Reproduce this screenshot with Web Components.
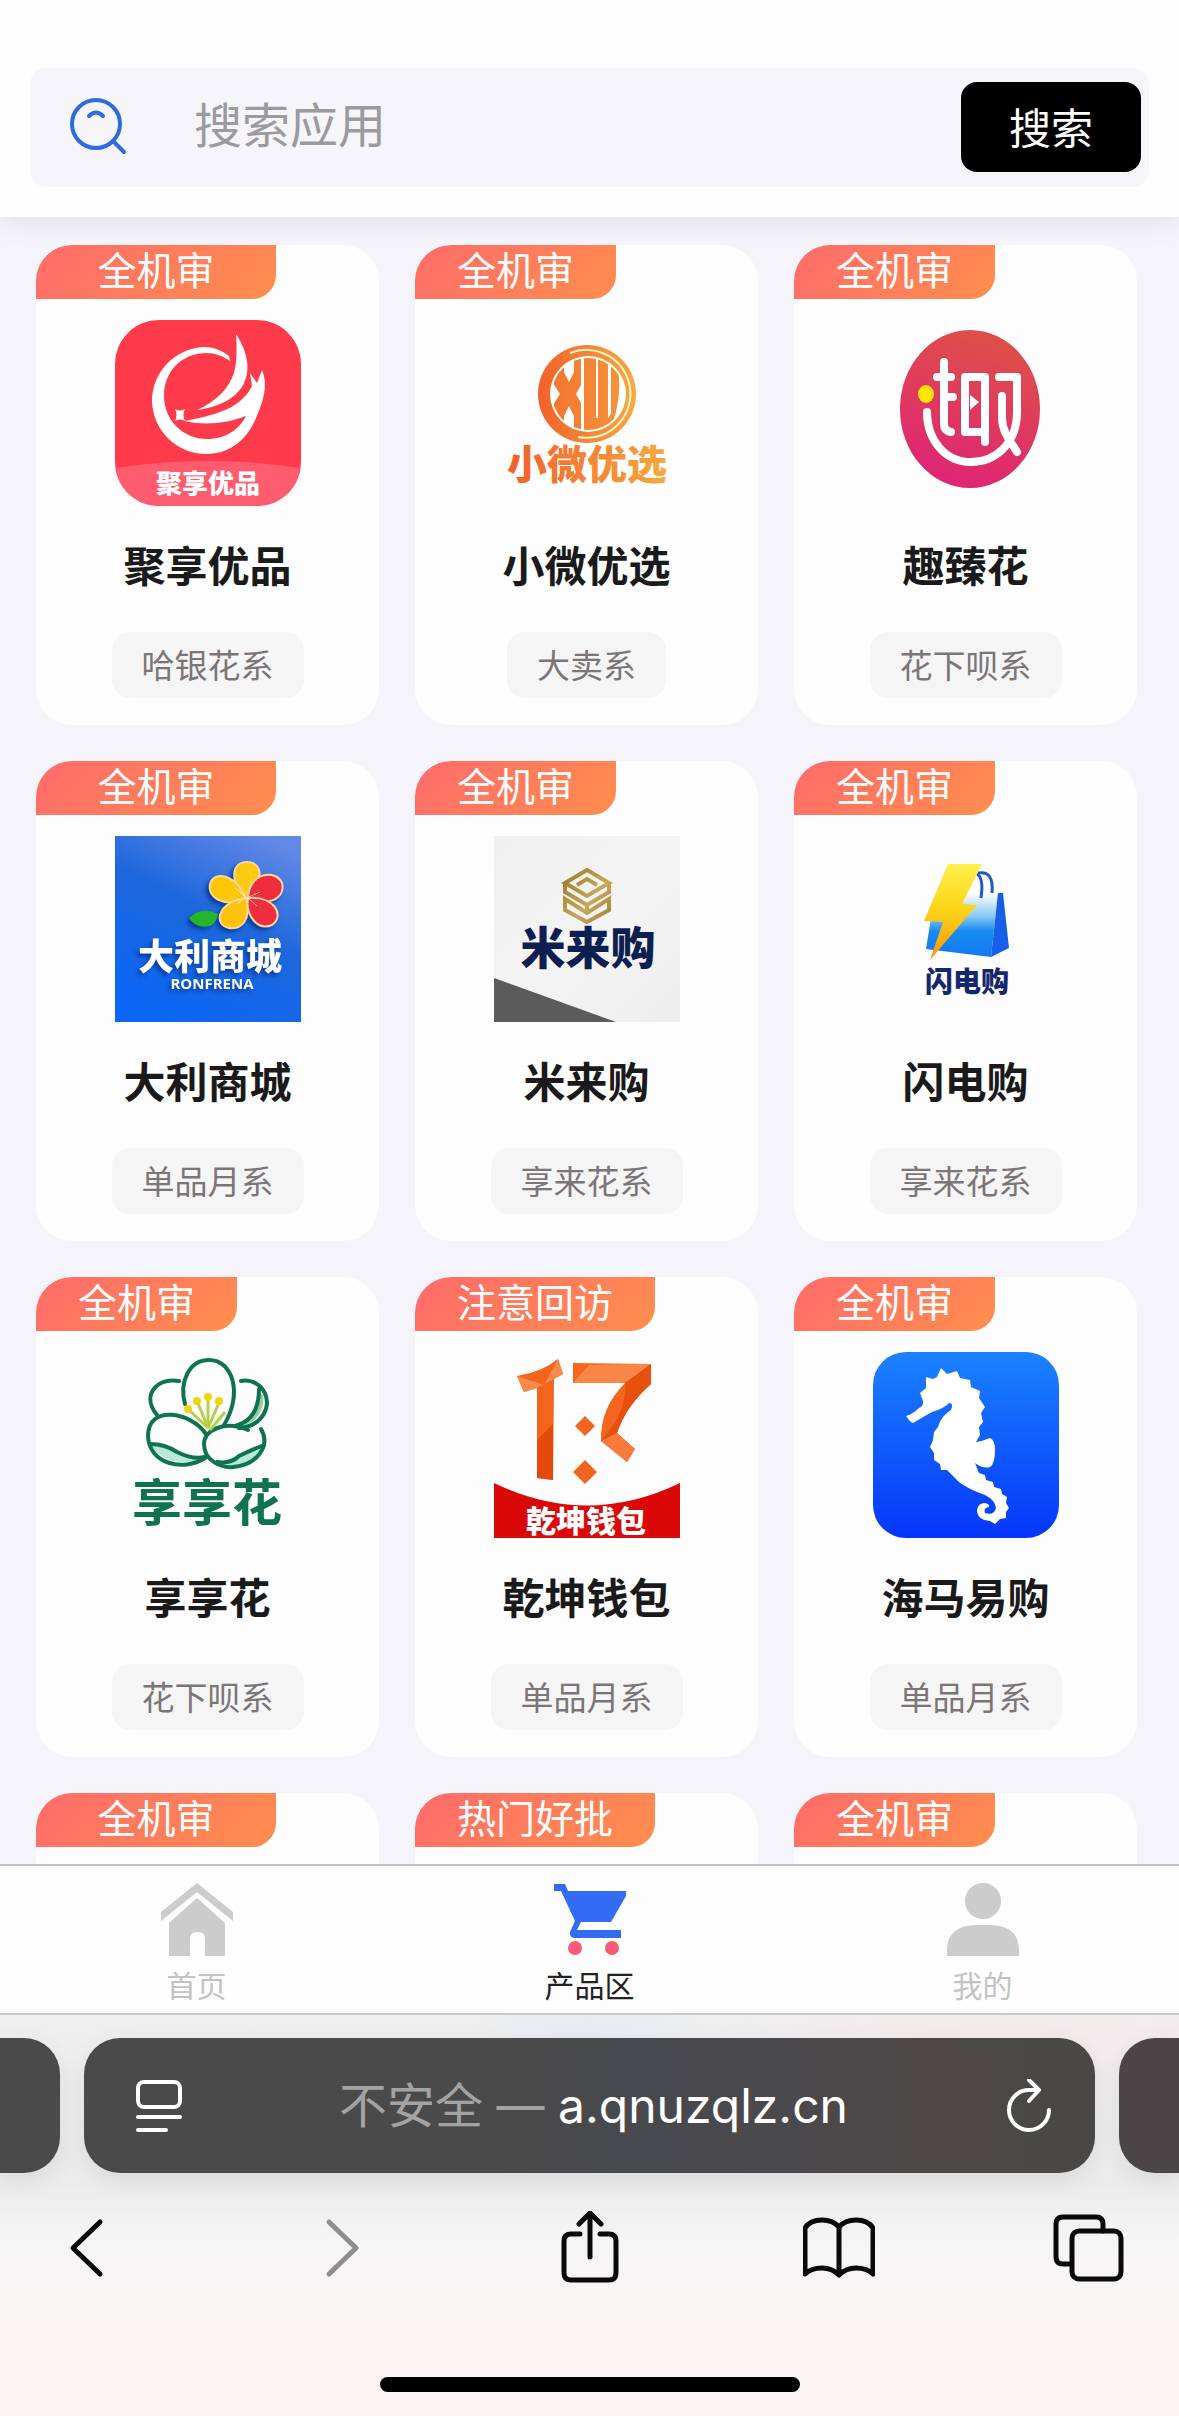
<!DOCTYPE html>
<html lang="zh-CN">
<head>
<meta charset="utf-8">
<meta name="viewport" content="width=device-width, initial-scale=1">
<title>产品区</title>
<style>
  body {
    margin: 0;
    height: 100vh;
    display: flex;
    flex-direction: column;
    overflow: hidden;
    background: #f4f4fa;
    color: #1a1a1a;
    font-family: "Noto Sans CJK SC", "Noto Sans", sans-serif;
  }

  main {
    flex: 1;
    min-height: 0;
    overflow: hidden;
    padding: 28px 42px 0 36px;
    display: grid;
    grid-template-columns: repeat(3, minmax(0, 1fr));
    grid-auto-rows: max-content;
    gap: 36px;
  }

  svg {
    overflow: visible;
  }

  svg text {
    font-family: "Noto Sans CJK SC", sans-serif;
    font-weight: 900;
    text-anchor: middle;
  }

  .raised {
    filter: drop-shadow(-3px 3px 2px #083f9c);
  }
</style>
</head>
<body>

<search-bar placeholder="搜索应用">搜索</search-bar>

<main>
  <app-card badge="全机审" wide name="聚享优品" series="哈银花系">
    <svg viewBox="0 0 186 186">
      <clipPath id="jx"><rect width="186" height="186" rx="44"/></clipPath>
      <g clip-path="url(#jx)">
        <rect width="186" height="186" fill="#ff3a4a"/>
        <path d="M0 148Q93 134 186 148V186H0Z" fill="#ff5c70"/>
      </g>
      <path fill="#fff" d="M114 36C106 30 98 27 90 27A54 54 0 0 0 37 81A54 54 0 0 0 91 134C116 134 133 118 141 98C147 84 154 66 147 50L142 63L135 53L137 66C128 84 110 94 69 101C92 106 112 103 131 96C124 110 110 119 92 119C68 119 49 100 49 76C49 52 66 33 92 33C100 33 108 36 115 41Z"/>
      <path fill="#fff" d="M121 14C134 34 136 52 127 67C118 80 103 87 82 90C102 81 114 68 119 53C122 42 122 28 121 14Z"/>
      <path fill="#fff" d="M60 89Q65 92 70 89Q67 95 70 101Q65 98 60 101Q63 95 60 89Z"/>
      <text x="93" y="173" font-size="26" fill="#fff">聚享优品</text>
    </svg>
  </app-card>

  <app-card badge="全机审" name="小微优选" series="大卖系">
    <svg viewBox="0 0 186 186">
      <defs>
        <linearGradient id="xw"><stop stop-color="#f2602b"/><stop offset="1" stop-color="#f6ab3e"/></linearGradient>
        <linearGradient id="xwt" gradientUnits="userSpaceOnUse" x1="14" x2="172"><stop stop-color="#f2602b"/><stop offset="1" stop-color="#f6a93e"/></linearGradient>
        <clipPath id="xwc"><circle cx="94" cy="74" r="36"/></clipPath>
      </defs>
      <circle cx="93" cy="74" r="49" fill="url(#xw)"/>
      <path d="M76 33A44 44 0 1 1 84 117" fill="none" stroke="#fff3cf" stroke-width="2"/>
      <circle cx="94" cy="74" r="38" fill="#fff"/>
      <g clip-path="url(#xwc)" fill="url(#xwt)">
        <path d="M57 38H70V52L75 62L80 52V38H87V65L82 74L87 83V112H80V96L75 86L70 96V112H57V88L66 74L57 60Z"/>
        <path d="M90 38H102V98H104V38H114V98L117 94V38H121Q129 60 122 92L116 112H90Z"/>
      </g>
      <path d="M103 46V98M115 44V94" stroke="#fff" stroke-width="2"/>
      <text x="93" y="159" font-size="40" fill="url(#xwt)">小微优选</text>
    </svg>
  </app-card>

  <app-card badge="全机审" name="趣臻花" series="花下呗系">
    <svg viewBox="0 0 186 186">
      <linearGradient id="qz" x1=".7" y1="0" x2=".4" y2="1"><stop offset=".1" stop-color="#df4d4b"/><stop offset="1" stop-color="#df2475"/></linearGradient>
      <ellipse cx="97" cy="89" rx="70" ry="79" fill="url(#qz)"/>
      <g fill="none" stroke="#fff" stroke-width="8" stroke-linecap="round" stroke-linejoin="round">
        <path d="M71 42V104Q71 111 78 112M64 57H78M71 77H80"/>
        <path d="M112 112H92V57H112V122"/>
        <path d="M126 57H144V92C144 124 122 142 98 142C72 142 54 120 54 92"/>
        <path d="M129 76V98C129 112 138 122 144 132"/>
      </g>
      <path d="M97 75L106 82L97 90Z" fill="#fff"/>
      <ellipse cx="53" cy="74" rx="8" ry="9" fill="#ffe600"/>
    </svg>
  </app-card>

  <app-card badge="全机审" wide name="大利商城" series="单品月系">
    <svg viewBox="0 0 186 186">
      <linearGradient id="dl" x1=".8" y1="0" x2=".3" y2="1"><stop stop-color="#6288e6"/><stop offset=".45" stop-color="#1e67dc"/><stop offset="1" stop-color="#0b66f5"/></linearGradient>
      <rect width="186" height="186" fill="url(#dl)"/>
      <g class="raised">
        <path d="M74 82Q86 70 103 78Q100 94 84 90Q78 88 74 82Z" fill="#25b52c"/>
        <g stroke="#f9d9a0" stroke-width="2">
          <path d="M131 63C114 46 116 26 132 26C148 26 150 46 131 63Z" fill="#ffc913"/>
          <path d="M131 63C110 72 92 62 95 48C99 34 121 38 131 63Z" fill="#ffc507"/>
          <path d="M131 62C137 84 126 94 114 92C98 89 102 66 131 62Z" fill="#ffc20a"/>
          <path d="M133 62C134 36 161 33 167 47C171 63 152 71 133 62Z" fill="#ee2d3e"/>
          <path d="M133 62C160 60 170 80 157 89C143 95 130 80 133 62Z" fill="#ee2d3e"/>
        </g>
        <path d="M131 61L120 52M131 61L122 68M134 61L145 56M134 63L142 70" stroke="#fff" stroke-opacity=".6"/>
        <text x="95" y="134" font-size="36" fill="#fff">大利商城</text>
        <text x="97" y="153" font-size="15" fill="#fff" style="font-family: 'Open Sans', sans-serif; font-weight: 700">RONFRENA</text>
      </g>
    </svg>
  </app-card>

  <app-card badge="全机审" name="米来购" series="享来花系">
    <svg viewBox="0 0 186 186">
      <defs>
        <linearGradient id="ml" x1="0" y1="0" x2="1" y2="1"><stop stop-color="#efefef"/><stop offset=".5" stop-color="#f4f4f4"/><stop offset="1" stop-color="#ededed"/></linearGradient>
        <linearGradient id="gold" x1="0" y1="0" x2="1" y2="1"><stop stop-color="#9b7c2c"/><stop offset=".6" stop-color="#c9a858"/><stop offset="1" stop-color="#a07f3a"/></linearGradient>
      </defs>
      <rect width="186" height="186" fill="url(#ml)"/>
      <path d="M0 142L122 186H0Z" fill="#5b5b5b"/>
      <path fill="none" stroke="url(#gold)" stroke-width="4" d="M93 34L115 47L93 60L71 47ZM83 49L93 43L103 49M71 46V56L93 69L115 56V46M71 63L93 77L115 63V74L93 86L71 74ZM93 70V77"/>
      <text x="94" y="129" font-size="45" fill="#0c1f50">米来购</text>
    </svg>
  </app-card>

  <app-card badge="全机审" name="闪电购" series="享来花系">
    <svg viewBox="0 0 186 186">
      <defs>
        <linearGradient id="bag" x1="0" y1="0" x2="0" y2="1"><stop stop-color="#fff"/><stop offset=".35" stop-color="#8dcbf2"/><stop offset=".6" stop-color="#178bf0"/><stop offset="1" stop-color="#1278f2"/></linearGradient>
        <linearGradient id="bolt" x1="0" y1="0" x2="0" y2="1"><stop stop-color="#fff04a"/><stop offset=".5" stop-color="#fcd116"/><stop offset="1" stop-color="#f79310"/></linearGradient>
      </defs>
      <path d="M95 57H125L118 121L53 113L58 82Z" fill="url(#bag)"/>
      <path d="M125 57H130L136 112L118 121Z" fill="#1560e6"/>
      <path d="M104 38Q111 42 108 62M105 37Q121 34 119 57" fill="none" stroke="#2058c8" stroke-width="3"/>
      <path d="M75 28H109L89 68L104 69L57 124L70 86L51 85Z" fill="url(#bolt)"/>
      <text x="94" y="156" font-size="28" fill="#15276c">闪电购</text>
    </svg>
  </app-card>

  <app-card badge="全机审" name="享享花" series="花下呗系">
    <svg viewBox="0 0 186 186">
      <path d="M35 92Q50 92 62 100Q78 108 90 105Q70 114 52 107Q38 100 35 92ZM104 112Q116 112 124 104Q134 99 150 94Q144 110 126 114Q114 116 104 112Z" fill="#b8e8d8"/>
      <path d="M143 38C143 56 138 68 118 74C138 76 150 60 148 44Z" fill="#8fd0a0"/>
      <g fill="none" stroke="#0f7350" stroke-width="4" stroke-linecap="round">
        <path d="M70 52C64 30 74 8 94 8C118 8 128 42 109 73"/>
        <path d="M64 29C44 25 25 42 42 63M126 29C148 25 162 52 143 69Q136 75 124 76M144 37C144 58 136 70 120 74"/>
        <path d="M91 82C76 60 33 52 33 84C34 112 68 120 90 106"/>
        <path d="M133 78C110 68 89 78 89 92C89 110 108 116 118 115C142 113 156 94 146 77"/>
        <path d="M35 92Q50 92 62 100Q78 108 90 105M102 110Q116 112 124 104Q134 99 149 93"/>
      </g>
      <path d="M93 76L74 58M93 76L83 51M93 76V46M93 76L104 51M95 78L110 60" stroke="#b7cf4a" stroke-width="3"/>
      <g fill="#f2d50c"><circle cx="73" cy="57" r="4"/><circle cx="82" cy="49" r="4"/><circle cx="93" cy="45" r="4"/><circle cx="104" cy="49" r="4"/></g>
      <text x="92" y="169" font-size="50" fill="#0f7350" style="font-weight: 700">享享花</text>
    </svg>
  </app-card>

  <app-card badge="注意回访" name="乾坤钱包" series="单品月系">
    <svg viewBox="0 0 186 186">
      <path d="M23 24Q48 20 64 7L69 22L60 27L59 128L43 126V36L30 40Z" fill="#f4641c"/>
      <path d="M43 88L59 72V128L43 126Z" fill="#e34a0c"/>
      <path d="M23 24L50 33L64 7L69 22L43 36L30 40Z" fill="#f98a4c"/>
      <path d="M79 11L157 12V32Q132 54 123 81L141 97L133 110L107 89Q106 56 131 31H79Z" fill="#f4661f"/>
      <path d="M157 12L131 31H79L95 13Z" fill="#fa8648"/>
      <path d="M157 12V32Q132 54 123 81L107 89Q134 58 131 31Z" fill="#e8500f"/>
      <path d="M107 89L123 81L141 97L133 110Z" fill="#f97a3c"/>
      <path d="M91 64L101 74L91 84L81 74ZM91 108L103 120L91 132L79 120Z" fill="#f26520"/>
      <path d="M0 131Q93 176 186 131V186H0Z" fill="#da0809"/>
      <text x="92" y="180" font-size="30" fill="#fff">乾坤钱包</text>
    </svg>
  </app-card>

  <app-card badge="全机审" name="海马易购" series="单品月系">
    <svg viewBox="0 0 186 186">
      <linearGradient id="hm" x1="0" y1="0" x2="0" y2="1"><stop stop-color="#1b82ff"/><stop offset="1" stop-color="#0536fa"/></linearGradient>
      <rect width="186" height="186" rx="33" fill="url(#hm)"/>
      <path fill="#fff" d="M68 16L74 22L84 19L87 26L97 28L98 35L107 39L106 46L112 55L108 61L110 70L106 75L107 83L103 90Q110 89 117 86Q122 88 122 98Q122 112 117 115Q110 117 102 111L106 121L112 123L113 128L120 130L121 135L128 137L129 142L134 145L133 151L136 156L133 160L133 166L127 167L122 172L117 169Q104 168 104 158Q105 151 112 151Q117 152 116 155Q110 156 112 161Q121 164 123 156Q122 148 112 143Q95 137 86 130Q78 122 74 118L68 118L67 112L61 108L61 101L57 95L60 88L61 80L65 75Q68 64 78 58Q81 51 76 51Q72 56 59 60Q50 65 40 71Q37 70 33 64Q40 62 46 56Q51 54 50 49L47 41L53 36L53 25L60 27L64 25Z"/>
    </svg>
  </app-card>

  <app-card badge="全机审" wide></app-card>
  <app-card badge="热门好批"></app-card>
  <app-card badge="全机审"></app-card>
</main>

<tab-bar>
  <tab-item label="首页">
    <svg viewBox="0 0 72 73" fill="#ccc">
      <path d="M36 0L72 29V38L36 9L0 38V29Z"/>
      <path d="M36 15L64 40V73H44V55Q44 49 36 49Q29 49 29 55V73H8V40Z"/>
    </svg>
  </tab-item>
  <tab-item label="产品区" active>
    <svg viewBox="0 0 72 73">
      <path fill="#336cf4" fill-rule="evenodd" d="M0 1H11L14 8H72V13L57 39H27L23 47H67V55H20Q15 54 16 49L21 38L7 8H0Z"/>
      <circle cx="21" cy="65" r="7" fill="#fb5a76"/><circle cx="58" cy="65" r="7" fill="#fb5a76"/>
    </svg>
  </tab-item>
  <tab-item label="我的">
    <svg viewBox="0 0 72 73" fill="#ccc">
      <circle cx="36" cy="18" r="18"/>
      <path d="M0 73V66Q1 42 30 42H42Q71 42 72 66V73Z"/>
    </svg>
  </tab-item>
</tab-bar>

<browser-bar host="a.qnuzqlz.cn">不安全</browser-bar>

<script>
class BaseElement extends HTMLElement {
  render(html) {
    const template = document.createElement('template')
    template.innerHTML = html
    this.attachShadow({ mode: 'open' })
    this.shadowRoot.appendChild(template.content.cloneNode(true))
  }
}

customElements.define('search-bar', class extends BaseElement {
  connectedCallback() {
    this.render(`
      <form>
        <label for="query" aria-label="搜索">
          <svg viewBox="0 0 56 56" fill="none" stroke="#2d6cdf" stroke-width="4" stroke-linecap="round">
            <circle cx="26" cy="25" r="24"/>
            <path d="M43 42L54 53M19 17Q26 10 33 17"/>
          </svg>
        </label>
        <input id="query" type="text" placeholder="${this.getAttribute('placeholder')}">
        <button type="button"><slot></slot></button>
      </form>
      <style>
        :host {
          display: block;
          position: relative;
          padding: 68px 30px 30px;
          background: #fdfdfd;
          box-shadow: 0 2px 28px rgba(0, 0, 0, .1);
        }
        form {
          display: flex;
          align-items: center;
          padding: 14px 8px 15px 40px;
          border-radius: 16px;
          background: #f5f5fa;
        }
        label, svg {
          display: block;
          width: 56px;
          height: 56px;
        }
        svg {
          overflow: visible;
        }
        input {
          flex: 1;
          min-width: 0;
          height: 90px;
          box-sizing: border-box;
          margin-left: 68px;
          padding: 0 0 10px;
          border: none;
          outline: none;
          background: transparent;
          font: inherit;
          font-size: 48px;
        }
        input::placeholder {
          color: #9a9a9f;
          opacity: 1;
        }
        button {
          width: 180px;
          height: 90px;
          padding: 0 0 4px;
          border: none;
          border-radius: 16px;
          background: #000;
          color: #fff;
          font: inherit;
          font-size: 42px;
        }
      </style>
    `)
  }
})

customElements.define('app-card', class extends BaseElement {
  connectedCallback() {
    const name = this.getAttribute('name')
    const series = this.getAttribute('series')

    // cards without a name only show their badge
    this.render(`
      <span class="badge">${this.getAttribute('badge')}</span>
      ${name ? `
        <div class="logo"><slot></slot></div>
        <h2>${name}</h2>
        <span class="series">${series}</span>
      ` : ''}
      <style>
        :host {
          display: flex;
          flex-direction: column;
          align-items: center;
          box-sizing: border-box;
          min-height: 480px;
          padding-bottom: 27px;
          border-radius: 36px;
          background: #fdfdfd;
        }
        .badge {
          align-self: flex-start;
          box-sizing: border-box;
          height: 54px;
          padding: 0 42px;
          border-radius: 36px 0 24px 0;
          background: linear-gradient(135deg, #ff6b6b, #ff8e4d);
          color: #fff;
          font-size: 39px;
          line-height: 46px;
          text-align: center;
        }
        :host([wide]) .badge {
          min-width: 240px;
        }
        .logo {
          width: 186px;
          height: 186px;
          margin-top: 21px;
        }
        ::slotted(svg) {
          display: block;
          width: 100%;
          height: 100%;
        }
        h2 {
          margin: 28px 0 38px;
          font-size: 42px;
          font-weight: 700;
          line-height: 60px;
        }
        .series {
          padding: 0 30px 2px;
          border-radius: 18px;
          background: #f5f5f5;
          color: #7c7577;
          font-size: 33px;
          line-height: 64px;
        }
      </style>
    `)
  }
})

customElements.define('tab-bar', class extends BaseElement {
  connectedCallback() {
    this.render(`
      <nav><slot></slot></nav>
      <style>
        :host {
          display: block;
          border-top: 2px solid #c2c2c4;
          border-bottom: 2px solid #c8c8ca;
          background: #fdfdfd;
        }
        nav {
          display: flex;
          padding: 17px 0 11px;
        }
      </style>
    `)
  }
})

customElements.define('tab-item', class extends BaseElement {
  connectedCallback() {
    this.render(`
      <a href="#">
        <slot></slot>
        <span>${this.getAttribute('label')}</span>
      </a>
      <style>
        :host {
          display: block;
          flex: 1;
          color: #c3c3c3;
        }
        :host([active]) {
          color: #222;
        }
        a {
          display: flex;
          flex-direction: column;
          align-items: center;
          gap: 10px;
          color: inherit;
          font-size: 30px;
          line-height: 36px;
          text-decoration: none;
        }
        ::slotted(svg) {
          display: block;
          width: 72px;
          height: 73px;
        }
      </style>
    `)
  }
})

customElements.define('browser-bar', class extends BaseElement {
  connectedCallback() {
    this.render(`
      <div class="address-row">
        <div class="peek left"></div>
        <div class="address">
          <button aria-label="页面设置">
            <svg viewBox="0 0 54 54">
              <rect x="6" y="3" width="42" height="25" rx="6"/>
              <path d="M6 38H48M6 51H34"/>
            </svg>
          </button>
          <p><span><slot></slot> — </span>${this.getAttribute('host')}</p>
          <button aria-label="刷新">
            <svg viewBox="0 0 54 54">
              <path d="M48 31A20 20 0 1 1 28 11H38M28 1L38 11L28 22"/>
            </svg>
          </button>
        </div>
        <div class="peek right"></div>
      </div>
      <div class="tools">
        <button aria-label="后退"><svg viewBox="0 0 72 72"><path d="M46 11L19 37L46 63"/></svg></button>
        <button aria-label="前进" class="dim"><svg viewBox="0 0 72 72"><path d="M25 11L52 37L25 63"/></svg></button>
        <button aria-label="分享">
          <svg viewBox="0 0 72 72">
            <path d="M26 23H17Q10 23 10 30V62Q10 69 17 69H55Q62 69 62 62V30Q62 23 55 23H46M36 46V3M25 13L36 2L47 13"/>
          </svg>
        </button>
        <button aria-label="书签">
          <svg viewBox="0 0 72 72">
            <path d="M36 16Q30 9 19 9Q7 9 2 17V63Q8 57 19 57Q29 57 36 64Q43 57 53 57Q64 57 70 63V17Q65 9 53 9Q42 9 36 16V63"/>
          </svg>
        </button>
        <button aria-label="标签页">
          <svg viewBox="0 0 72 72">
            <path d="M50 20V13Q50 6 43 6H10Q3 6 3 13V46Q3 53 10 53H18"/>
            <rect x="19" y="20" width="49" height="48" rx="7"/>
          </svg>
        </button>
      </div>
      <div class="home"></div>
      <style>
        :host {
          display: block;
          padding: 23px 0 24px;
          background:
            radial-gradient(ellipse at 50% 0, rgba(224, 230, 246, .5), transparent 14%),
            radial-gradient(ellipse at 85% 0, rgba(250, 230, 234, .5), transparent 20%),
            linear-gradient(#efefef, #ebebec 42%, #f6f5f5 56%, #fbf4f4);
        }
        button {
          padding: 0;
          border: none;
          background: none;
          color: inherit;
        }
        svg {
          display: block;
          fill: none;
          stroke: currentColor;
          stroke-width: 5;
          stroke-linecap: round;
          stroke-linejoin: round;
        }
        .address-row {
          display: flex;
          gap: 24px;
        }
        .address, .peek {
          height: 135px;
          background: #4a4a4b;
          box-shadow: 0 6px 24px rgba(0, 0, 0, .08);
        }
        .peek {
          width: 60px;
        }
        .left {
          border-radius: 0 36px 36px 0;
        }
        .right {
          border-radius: 36px 0 0 36px;
          background: #4a4546;
        }
        .address {
          flex: 1;
          display: flex;
          align-items: center;
          justify-content: space-between;
          box-sizing: border-box;
          padding: 0 40px 0 48px;
          border-radius: 36px;
          background: linear-gradient(90deg, #4a4a4a 40%, #48494d 56%, #4c4848 84%, #4a4747);
          color: #fff;
        }
        .address svg {
          width: 54px;
          height: 54px;
          stroke-width: 4;
        }
        p {
          margin: 0;
          font-family: Inter, "Noto Sans CJK SC", sans-serif;
          font-size: 48px;
          line-height: 72px;
        }
        p span {
          color: #a3a3a3;
        }
        .tools {
          display: flex;
          justify-content: space-between;
          padding: 38px 54px 94px;
          color: #0a0a0a;
        }
        .tools svg {
          width: 72px;
          height: 72px;
        }
        .tools .dim {
          color: #8e8e8e;
        }
        .home {
          width: 420px;
          height: 15px;
          margin: 0 auto;
          border-radius: 8px;
          background: #000;
        }
      </style>
    `)
  }
})
</script>
</body>
</html>
